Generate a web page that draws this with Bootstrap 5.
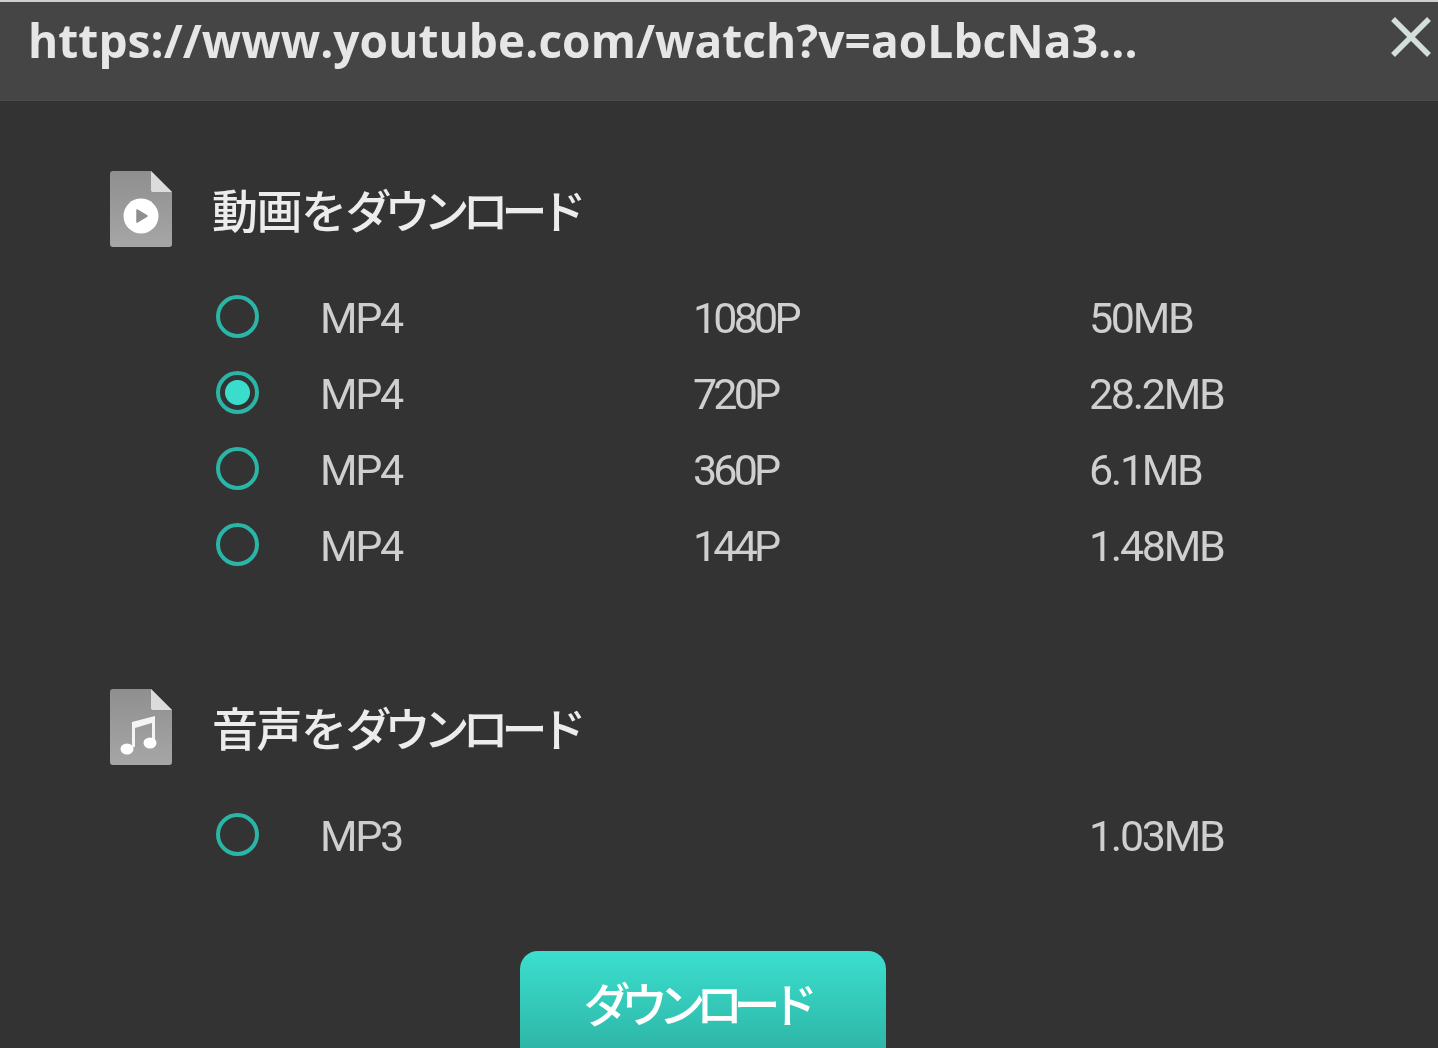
<!DOCTYPE html>
<html lang="ja">
<head>
<meta charset="utf-8">
<title>Download</title>
<link href="https://cdn.jsdelivr.net/npm/bootstrap@5.3.0/dist/css/bootstrap.min.css" rel="stylesheet">
<style>
html,body{height:1048px;overflow:hidden;background:#333}
.dlg{height:1048px;overflow:hidden;background:#333;color:#d4d4d4;font-family:Roboto,"Noto Sans CJK JP",sans-serif;filter:blur(.5px)}
.dlg-head{height:101px;background:#454545;border-top:2px solid #cfcfcf;border-bottom:1px solid #4b4b4b;padding-left:28px;padding-right:6px}
.dlg-url{font-family:"Open Sans",sans-serif;font-weight:700;font-size:46px;line-height:1;color:#e6e6e6;margin-top:-22px;letter-spacing:.07px}
.dlg-close{width:42px;height:42px;margin-top:-28px;stroke:#d3dfdb;stroke-width:5.5;fill:none;display:block}
.dlg-main{padding-left:110px}
.sec-one{padding-top:70px}
.sec-two{padding-top:105px}
.sec-head{height:76px;gap:40px}
.sec-icon{width:62px;height:76px;flex:none}
.sec-title{font-family:"Noto Sans CJK JP",sans-serif;font-size:46px;font-weight:500;line-height:1;color:#ececec;margin-top:-2px;white-space:nowrap}
.kana-wide{letter-spacing:-1.5px}
.kana-tight{letter-spacing:-7px}
.opt-list{padding-top:33px;padding-left:106px}
.opt-row{height:76px;display:grid;grid-template-columns:104px 373px 396px 1fr;align-items:center;margin:0}
.opt-radio.form-check-input{width:43px;height:43px;margin:0;border:4px solid #2ab5a7;background-color:transparent;background-image:none;box-shadow:none;margin-top:-3px}
.opt-radio.form-check-input:checked{background-color:transparent;border-color:#2ab5a7;background-image:radial-gradient(circle,#3adccc 0 12px,transparent 13px)}
.opt-cell{font-size:43px;line-height:1;color:#cfcfcf;letter-spacing:-2.3px;margin-top:1px}
.opt-res{letter-spacing:-3.800px}
.dlg-btn-wrap{padding-top:77px;padding-left:520px}
.dlg-btn.btn{width:366px;height:130px;border:0;border-radius:18px;background:linear-gradient(#3bdfce,#2aa99b);color:#fff;font-family:"Noto Sans CJK JP",sans-serif;font-size:47px;font-weight:500;line-height:1;padding:0 14px 30px 0;letter-spacing:-9.500px}
</style>
</head>
<body>
<div class="dlg">
  <div class="dlg-head d-flex align-items-center justify-content-between">
    <div class="dlg-url">https://www.youtube.com/watch?v=aoLbcNa3...</div>
    <svg class="dlg-close" viewBox="0 0 42 42" aria-label="close"><path d="M3 3 39 39M39 3 3 39"/></svg>
  </div>
  <div class="dlg-main">
    <section class="sec-one">
      <div class="sec-head d-flex align-items-center">
        <svg class="sec-icon" viewBox="0 0 62 76"><defs><linearGradient id="g1" x1="0" y1="0" x2="0" y2="1"><stop offset="0" stop-color="#8f8f8f"/><stop offset="1" stop-color="#a6a6a6"/></linearGradient></defs><path d="M3 0H41L62 21V73a3 3 0 0 1-3 3H3a3 3 0 0 1-3-3V3a3 3 0 0 1 3-3Z" fill="url(#g1)"/><path d="M41 0 62 21H43a2 2 0 0 1-2-2Z" fill="#dcdcdc"/><circle cx="31" cy="45" r="17.5" fill="#fff"/><path d="M27 39 37 45 27 51Z" fill="#8f8f8f" stroke="#8f8f8f" stroke-width="1.500" stroke-linejoin="round"/></svg>
        <div class="sec-title"><span class="kana-wide">動画を</span><span class="kana-tight">ダウンロード</span></div>
      </div>
      <div class="opt-list">
        <label class="opt-row"><input class="form-check-input opt-radio" type="radio" name="fmt"><span class="opt-cell">MP4</span><span class="opt-cell opt-res">1080P</span><span class="opt-cell">50MB</span></label>
        <label class="opt-row"><input class="form-check-input opt-radio" type="radio" name="fmt" checked><span class="opt-cell">MP4</span><span class="opt-cell opt-res">720P</span><span class="opt-cell">28.2MB</span></label>
        <label class="opt-row"><input class="form-check-input opt-radio" type="radio" name="fmt"><span class="opt-cell">MP4</span><span class="opt-cell opt-res">360P</span><span class="opt-cell">6.1MB</span></label>
        <label class="opt-row"><input class="form-check-input opt-radio" type="radio" name="fmt"><span class="opt-cell">MP4</span><span class="opt-cell opt-res">144P</span><span class="opt-cell">1.48MB</span></label>
      </div>
    </section>
    <section class="sec-two">
      <div class="sec-head d-flex align-items-center">
        <svg class="sec-icon" viewBox="0 0 62 76"><defs><linearGradient id="g2" x1="0" y1="0" x2="0" y2="1"><stop offset="0" stop-color="#8f8f8f"/><stop offset="1" stop-color="#a6a6a6"/></linearGradient></defs><path d="M3 0H41L62 21V73a3 3 0 0 1-3 3H3a3 3 0 0 1-3-3V3a3 3 0 0 1 3-3Z" fill="url(#g2)"/><path d="M41 0 62 21H43a2 2 0 0 1-2-2Z" fill="#dcdcdc"/><path d="M22 33 45 27V33L25 39V58H22ZM42 30H45V52H42Z" fill="#f4f4f4"/><ellipse cx="17" cy="60" rx="6.500" ry="5.500" fill="#fff"/><ellipse cx="40" cy="54" rx="6.500" ry="5.500" fill="#fff"/></svg>
        <div class="sec-title"><span class="kana-wide">音声を</span><span class="kana-tight">ダウンロード</span></div>
      </div>
      <div class="opt-list">
        <label class="opt-row"><input class="form-check-input opt-radio" type="radio" name="fmt"><span class="opt-cell">MP3</span><span class="opt-cell opt-res"></span><span class="opt-cell">1.03MB</span></label>
      </div>
    </section>
  </div>
  <div class="dlg-btn-wrap">
    <button type="button" class="btn dlg-btn">ダウンロード</button>
  </div>
</div>
<script src="https://cdn.jsdelivr.net/npm/bootstrap@5.3.0/dist/js/bootstrap.bundle.min.js"></script>
</body>
</html>
